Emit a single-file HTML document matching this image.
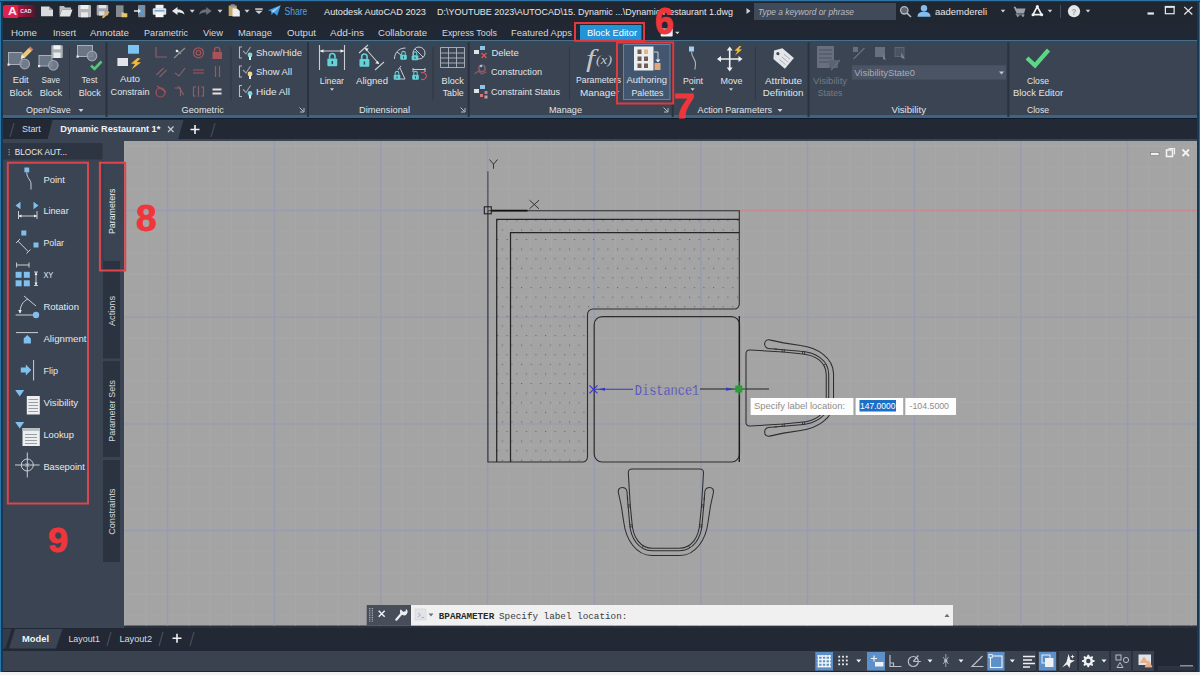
<!DOCTYPE html>
<html><head><meta charset="utf-8">
<style>
*{box-sizing:border-box;margin:0;padding:0}
html,body{width:1200px;height:675px;overflow:hidden;background:#222834;font-family:"Liberation Sans",sans-serif;}
#app{position:relative;width:1200px;height:675px;overflow:hidden;background:#222834;}
.abs{position:absolute}
.t{position:absolute;white-space:nowrap;color:#e4e7ea;font-size:11px;line-height:12px}
.c{text-align:center;transform:translateX(-50%)}
/* title */
#title{left:0;top:0;width:1200px;height:23px;background:#212731}
#menubar{left:0;top:23px;width:1200px;height:19px;background:linear-gradient(180deg,#222833 0,#222833 65%,#1a2a3a 85%,#0f2233 100%)}
#ribbon{left:3px;top:40px;width:1194px;height:79px;background:linear-gradient(180deg,#4f6d85 0,#4f6d85 1px,#33485a 1.5px,#3b4452 8px,#3b4452 75px,#3f6383 75.5px,#3f6383 77.5px,#0e1b2b 78px)}
.ptitle{left:0;top:104px;height:14px}
.sep{position:absolute;top:42px;width:1px;height:74px;background:#2c3340}
#ftabs{left:0;top:119px;width:1200px;height:20px;background:#222834}
#work{left:0;top:139px;width:1200px;height:489px;background:#3b4452}
#canvas{left:124px;top:141px;width:1073px;height:487px;background:#2a303c;overflow:hidden}
#ltabs{left:0;top:628px;width:1200px;height:23px;background:#222834}
#status{left:0;top:651px;width:1200px;height:21px;background:linear-gradient(180deg,#3a4250 0,#3a4250 19.5px,#1f2530 20px)}
#botline{left:0;top:672px;width:1200px;height:3px;background:#f2f2f2}
.m{top:26px;font-size:11px;line-height:13px;color:#d3d7dc}
</style></head><body>
<div id="app">
<div id="title" class="abs"></div>
<div id="menubar" class="abs"></div>
<div id="ribbon" class="abs"></div>
<div id="ftabs" class="abs"></div>
<div id="work" class="abs"></div>
<div id="canvas" class="abs"></div>
<div id="ltabs" class="abs"></div>
<div id="status" class="abs"></div>
<div id="botline" class="abs"></div>
<div class="abs" style="left:3px;top:5px;width:15px;height:12.500px;background:#e0204d;border-radius:2px 0 0 2px"></div>
<div class="abs" style="left:18px;top:5px;width:19px;height:12px;background:linear-gradient(90deg,#b0143c,#6a1532 70%,#2a2030)"></div>
<svg class="abs" style="left:0;top:0" width="1200" height="675" viewBox="0 0 1200 675" font-family="Liberation Sans, sans-serif">
<text x="8" y="15" textLength="9" lengthAdjust="spacingAndGlyphs" font-size="10.5" fill="#fbe6ec" font-weight="bold">A</text>
<text x="20.3" y="13.2" textLength="11.0" lengthAdjust="spacingAndGlyphs" font-size="5.8" fill="#fbe6ec" font-weight="bold">CAD</text>

 <path d="M41 6.500h8l4 3.500v6.300H41z" fill="#d9dbde"/><path d="M49 6.500v3.500h4z" fill="#9aa0a8"/>
 <path d="M59.500 6h4.500l1 1.500h6v2H62l-2.500 6.500z" fill="#b9bcc1"/><path d="M62 9.500h10.500l-2.500 7H59.500z" fill="#e2e4e6"/>
 <rect x="78" y="5" width="13" height="12.300" rx="1" fill="#b3b6bb"/><rect x="80.500" y="5" width="8" height="4" fill="#eeeeee"/><rect x="81" y="12.300" width="7" height="5" fill="#e8e8e8"/>
 <rect x="96.700" y="5" width="11.500" height="10.500" rx="1" fill="#a3a7ad"/><rect x="98.700" y="5" width="7.500" height="3.300" fill="#e4e4e4"/><rect x="99" y="11.300" width="5.500" height="4.200" fill="#dcdcdc"/><path d="M102.500 16.500l5.500-5.500 1.400 1.400-5.500 5.500-1.800.4z" fill="#e2b25a"/>
 <rect x="116" y="5.300" width="7.500" height="11.700" fill="#858a92"/><path d="M121.500 12.500h2.300l.8.800h2.700v4h-5.800z" fill="#e7c66a"/>
 <rect x="138" y="5" width="7.300" height="12.200" rx="1" fill="#858a92"/><rect x="139.300" y="6.800" width="4.700" height="8" fill="#5f96c4"/><path d="M134 10.300h4v-1.800l3 2.500-3 2.500v-1.800h-4z" fill="#e6e8ea"/>
 <rect x="155.500" y="4.800" width="8" height="4" fill="#f0f0f0"/><rect x="152.800" y="8.300" width="13.400" height="6.500" rx="1" fill="#dfe2e5"/><rect x="155.500" y="12.500" width="8" height="4.700" fill="#f7f7f7"/><rect x="154.500" y="10" width="10" height="1.500" fill="#7aa7cf"/>
 <path d="M172 11l5.500-4v2.500c4 0 6.500 1.500 7 5.200-2-1.800-4-2.200-7-2.200v2.500z" fill="#e6e8ea"/>
 <path d="M211.700 11l-5.500-4v2.500c-4 0-6.500 1.500-7 5.200 2-1.800 4-2.200 7-2.200v2.500z" fill="#6a717b"/>
 <rect x="228.700" y="5.500" width="8" height="10.500" fill="#c8a56a"/><rect x="230.700" y="4.300" width="4" height="2.700" fill="#8d9299"/><path d="M232.500 8.500h4.500l2.800 2.500V16.500H232.500z" fill="#eceeef"/>
 <rect x="255.200" y="8.300" width="7.500" height="1.500" fill="#d0d3d7"/><path d="M255.200 10.800h7.500l-3.750 3.200z" fill="#d0d3d7"/>
 <path d="M268 10.300l12.700-5.100-3.500 10.500-3.700-3.200-2 2.800-.3-4z" fill="#3f9be0"/><path d="M271.200 11.300l9.500-6.100-7.200 7.300z" fill="#a9d4f5"/>
<path d="M189.7 9.7h5l-2.5 3z" fill="#d0d3d7"/>
<path d="M217.5 9.7h5l-2.5 3z" fill="#d0d3d7"/>
<path d="M244.5 9.7h5l-2.5 3z" fill="#d0d3d7"/>
<text x="284.5" y="15" textLength="22.8" lengthAdjust="spacingAndGlyphs" font-size="10" fill="#56a2d9">Share</text>
<text x="324" y="15" textLength="102" lengthAdjust="spacingAndGlyphs" font-size="9.5" fill="#e6e8ea">Autodesk AutoCAD 2023</text>
<text x="437" y="15" textLength="296" lengthAdjust="spacingAndGlyphs" font-size="9.5" fill="#e6e8ea">D:\YOUTUBE 2023\AUTOCAD\15. Dynamic ...\Dynamic Restaurant 1.dwg</text>
<path d="M746.500 8l4 3-4 3z" fill="#d0d3d7"/>
<rect x="754" y="3" width="142" height="17" fill="#414a59"/>
<text x="758" y="15" textLength="96" lengthAdjust="spacingAndGlyphs" font-size="9" fill="#b8bdc4" font-style="italic">Type a keyword or phrase</text>

 <circle cx="904.300" cy="10.300" r="3.700" fill="#5d6672" stroke="#b4b9c0" stroke-width="1.300"/><path d="M907 13.200l4 3.800" stroke="#b4b9c0" stroke-width="1.700"/>
 <circle cx="924" cy="8.300" r="3.200" fill="#84bdec"/><path d="M917.500 16.800c0-3.800 3-5 6.500-5s6.500 1.200 6.500 5z" fill="#84bdec"/>
 <path d="M1013.500 6.800h2.200l.6 1.700h9.200l-1.500 5h-7.200z" fill="#9ba1a9"/><path d="M1016.500 13.500l-.5 1.300h8.500" stroke="#9ba1a9" stroke-width=".9" fill="none"/><circle cx="1017.800" cy="15.800" r="1.100" fill="#9ba1a9"/><circle cx="1023" cy="15.800" r="1.100" fill="#9ba1a9"/>
 <path d="M1037.300 6.700l-4.300 8h8.600z" fill="none" stroke="#eef0f2" stroke-width="1.700" stroke-linejoin="round"/><circle cx="1037.300" cy="6.500" r="1.500" fill="#eef0f2"/><circle cx="1033" cy="14.800" r="1.500" fill="#eef0f2"/><circle cx="1041.700" cy="14.800" r="1.500" fill="#eef0f2"/>
 <rect x="1060" y="5" width="1" height="13" fill="#454e5c"/>
 <circle cx="1074" cy="11.200" r="6.100" fill="#e4e6e8"/>
 <rect x="1147.500" y="12.400" width="6.400" height="2.200" fill="#e6e8ea"/>
 <rect x="1165.400" y="6.900" width="8.700" height="6.800" fill="none" stroke="#e6e8ea" stroke-width="1.200"/><rect x="1164.800" y="5.900" width="9.900" height="1.800" fill="#e6e8ea"/>
 <path d="M1184.300 6.900l8 7.600m0-7.600l-8 7.600" stroke="#e6e8ea" stroke-width="1.300"/>
<path d="M1000.75 9.85h4.5l-2.25 2.7z" fill="#d0d3d7"/>
<path d="M1047.75 9.85h4.5l-2.25 2.7z" fill="#d0d3d7"/>
<path d="M1085.75 9.85h4.5l-2.25 2.7z" fill="#d0d3d7"/>
<text x="1071.6" y="14.6" textLength="4.8" lengthAdjust="spacingAndGlyphs" font-size="9.5" fill="#9fa4ab" font-weight="bold">?</text>
<text x="935" y="15" textLength="52" lengthAdjust="spacingAndGlyphs" font-size="9.5" fill="#e6e8ea">aademdereli</text>
</svg>

<svg class="abs" style="left:0;top:0" width="1200" height="675" viewBox="0 0 1200 675" font-family="Liberation Sans, sans-serif">
<text x="11" y="36" textLength="26" lengthAdjust="spacingAndGlyphs" font-size="9.5" fill="#d3d7dc">Home</text>
<text x="53" y="36" textLength="23" lengthAdjust="spacingAndGlyphs" font-size="9.5" fill="#d3d7dc">Insert</text>
<text x="90" y="36" textLength="39" lengthAdjust="spacingAndGlyphs" font-size="9.5" fill="#d3d7dc">Annotate</text>
<text x="144" y="36" textLength="44" lengthAdjust="spacingAndGlyphs" font-size="9.5" fill="#d3d7dc">Parametric</text>
<text x="203" y="36" textLength="20" lengthAdjust="spacingAndGlyphs" font-size="9.5" fill="#d3d7dc">View</text>
<text x="238" y="36" textLength="34" lengthAdjust="spacingAndGlyphs" font-size="9.5" fill="#d3d7dc">Manage</text>
<text x="287" y="36" textLength="29" lengthAdjust="spacingAndGlyphs" font-size="9.5" fill="#d3d7dc">Output</text>
<text x="330" y="36" textLength="34" lengthAdjust="spacingAndGlyphs" font-size="9.5" fill="#d3d7dc">Add-ins</text>
<text x="378" y="36" textLength="49" lengthAdjust="spacingAndGlyphs" font-size="9.5" fill="#d3d7dc">Collaborate</text>
<text x="442" y="36" textLength="55" lengthAdjust="spacingAndGlyphs" font-size="9.5" fill="#d3d7dc">Express Tools</text>
<text x="511" y="36" textLength="61" lengthAdjust="spacingAndGlyphs" font-size="9.5" fill="#d3d7dc">Featured Apps</text>
<rect x="580" y="25" width="61.500" height="15.500" fill="#2494d8"/>
<text x="587" y="36" textLength="50" lengthAdjust="spacingAndGlyphs" font-size="9.5" fill="#ffffff">Block Editor</text>
<rect x="660.700" y="28.500" width="12" height="8" rx="1" fill="#eef0f2"/>
<path d="M675.05 31.65h4.5l-2.25 2.7z" fill="#d0d3d7"/>
</svg>

<svg class="abs" style="left:0;top:0" width="1200" height="675" viewBox="0 0 1200 675" font-family="Liberation Sans, sans-serif">
<rect x="105.5" y="42" width="2" height="75" fill="#2b323f"/>
<rect x="307" y="42" width="2" height="75" fill="#2b323f"/>
<rect x="467.7" y="42" width="2" height="75" fill="#2b323f"/>
<rect x="671.7" y="42" width="2" height="75" fill="#2b323f"/>
<rect x="807.5" y="42" width="2" height="75" fill="#2b323f"/>
<rect x="1007.3" y="42" width="2" height="75" fill="#2b323f"/>
<rect x="69.0" y="47" width="1" height="53" fill="#303745"/>
<rect x="230.5" y="47" width="1" height="53" fill="#303745"/>
<rect x="432.5" y="47" width="1" height="53" fill="#303745"/>
<rect x="569.0" y="47" width="1" height="53" fill="#303745"/>
<rect x="754.9" y="47" width="1" height="53" fill="#303745"/>
<rect x="623.5" y="44.500" width="46.5" height="55" fill="#42566f" stroke="#6484a6" stroke-width="1"/>
<rect x="8.500" y="52.5" width="13.5" height="12" fill="#6a7585" stroke="#a9b0ba" stroke-width="1"/><rect x="7.5" y="63.500" width="2.200" height="2.200" fill="#e8eaec"/>
<circle cx="24.700" cy="64" r="4.800" fill="#7a8494" fill-opacity=".85" stroke="#9ba3ae" stroke-width="1.2"/>
<path d="M20.800 58.800l1.200-4 7-7 3 3-7 7z" fill="#ecc979"/><path d="M29 47.800l1.300-1.300 3 3-1.300 1.300z" fill="#d9757a"/><path d="M20.800 58.800l1.200-4 2.800 2.800z" fill="#f3efe6"/>
<rect x="39" y="55.500" width="13" height="10.5" fill="#6a7585" stroke="#a9b0ba" stroke-width="1"/><rect x="38" y="65" width="2.200" height="2.200" fill="#e8eaec"/>
<circle cx="53.300" cy="65.300" r="4.800" fill="#7a8494" fill-opacity=".85" stroke="#9ba3ae" stroke-width="1.2"/>
<rect x="51.300" y="45.300" width="11.5" height="12.700" rx="1" fill="#a9aeb5"/><rect x="53.5" y="45.300" width="7" height="4" fill="#f1f2f3"/><rect x="53.5" y="52.500" width="7" height="5.5" fill="#e9eaec"/>
<rect x="77.5" y="45.500" width="15" height="11" fill="#6a7585" stroke="#a9b0ba" stroke-width="1"/><rect x="76.500" y="55.5" width="2.200" height="2.200" fill="#e8eaec"/>
<circle cx="92" cy="56" r="4.800" fill="#7a8494" fill-opacity=".85" stroke="#9ba3ae" stroke-width="1.2"/>
<path d="M91 65.500l3.500 3.500 7-7.500" fill="none" stroke="#52c878" stroke-width="2.600"/>
<text x="12.7" y="83.3" textLength="16.0" lengthAdjust="spacingAndGlyphs" font-size="9.5" fill="#e1e4e8">Edit</text>
<text x="9.6" y="95.5" textLength="22.4" lengthAdjust="spacingAndGlyphs" font-size="9.5" fill="#e1e4e8">Block</text>
<text x="41.6" y="83.3" textLength="18.4" lengthAdjust="spacingAndGlyphs" font-size="9.5" fill="#e1e4e8">Save</text>
<text x="39.7" y="95.5" textLength="22.3" lengthAdjust="spacingAndGlyphs" font-size="9.5" fill="#e1e4e8">Block</text>
<text x="81.6" y="83.3" textLength="15.7" lengthAdjust="spacingAndGlyphs" font-size="9.5" fill="#e1e4e8">Test</text>
<text x="78.7" y="95.5" textLength="22.0" lengthAdjust="spacingAndGlyphs" font-size="9.5" fill="#e1e4e8">Block</text>
<text x="26" y="113.3" textLength="44.7" lengthAdjust="spacingAndGlyphs" font-size="9.5" fill="#e1e4e8">Open/Save</text>
<path d="M78.5 109.0h5l-2.5 3z" fill="#d0d3d7"/>
<rect x="128" y="45" width="11" height="8.700" fill="#7cc4f2"/><rect x="117.400" y="58" width="10.600" height="8" fill="#e2e4e8"/>
<path d="M137.500 58l-6.500 5.500 4 .5-3.500 5.500 9.500-7-4.200-.5 3.700-3.500z" fill="#f1b93c"/>
<text x="120" y="82.2" textLength="20" lengthAdjust="spacingAndGlyphs" font-size="9.5" fill="#e1e4e8">Auto</text>
<text x="110.6" y="95" textLength="38.9" lengthAdjust="spacingAndGlyphs" font-size="9.5" fill="#e1e4e8">Constrain</text>
<path d="M156 47v10h11" fill="none" stroke="#86606a" stroke-width="1.2"/>
<path d="M174 58l11-10M176 50l5 4" fill="none" stroke="#8c8f98" stroke-width="1.2"/><circle cx="177" cy="51" r="1.3" fill="#e8e8ea"/>
<circle cx="198.500" cy="52.800" r="5" fill="none" stroke="#a9525a" stroke-width="1.2"/><circle cx="198.5" cy="52.800" r="2.300" fill="none" stroke="#a9525a" stroke-width="1.2"/>
<rect x="212.500" y="52" width="9.500" height="7" fill="#a9525a"/><path d="M214.500 52v-2a2.700 2.700 0 0 1 5.400 0v2" fill="none" stroke="#a9525a" stroke-width="1.300"/>
<path d="M156.500 75l7-7M159.500 77l7-7" stroke="#86606a" stroke-width="1.2"/>
<path d="M175 73l4 3 6-8" fill="none" stroke="#86606a" stroke-width="1.2"/>
<path d="M193 70h11M193 73h11" stroke="#a9525a" stroke-width="1.2"/>
<path d="M215.500 66v11M219.500 66v11" stroke="#a9525a" stroke-width="1.2"/>
<circle cx="160.500" cy="92.500" r="4.500" fill="none" stroke="#a9525a" stroke-width="1.2"/><path d="M157 86l9 6" stroke="#a9525a" stroke-width="1.2"/>
<path d="M174.500 88h6v8M178 86l6 9" fill="none" stroke="#86606a" stroke-width="1.2"/>
<path d="M196 87h-2.500v9h2.500M201 87h2.500v9h-2.500M198.500 86v11" fill="none" stroke="#86606a" stroke-width="1.2"/>
<path d="M212.500 89.500h9M212.500 93.500h9" stroke="#e9dfe2" stroke-width="1.800"/>
<path d="M242 47h-2.500v11h2.500" fill="none" stroke="#b5bbc4" stroke-width="1.100"/><path d="M243 51l3 3 4.500-7" fill="none" stroke="#9aa1ab" stroke-width="1.100"/>
<circle cx="250" cy="55" r="2.400" fill="#7fd6dc"/><rect x="249" y="56.5" width="2" height="3.500" fill="#e9ecef"/>
<path d="M242 66h-2.500v11h2.500" fill="none" stroke="#b5bbc4" stroke-width="1.100"/><path d="M243 70l3 3 4.500-7" fill="none" stroke="#9aa1ab" stroke-width="1.100"/>
<circle cx="250" cy="74" r="2.400" fill="#f4d58a"/><rect x="249" y="75.5" width="2" height="3.500" fill="#e9ecef"/>
<path d="M242 85.5h-2.500v11h2.500" fill="none" stroke="#b5bbc4" stroke-width="1.100"/><path d="M243 89.5l3 3 4.500-7" fill="none" stroke="#9aa1ab" stroke-width="1.100"/>
<circle cx="250" cy="93.5" r="2.400" fill="#7fd6dc"/><rect x="249" y="95.0" width="2" height="3.500" fill="#e9ecef"/>
<text x="256" y="56.2" textLength="46" lengthAdjust="spacingAndGlyphs" font-size="9.5" fill="#e1e4e8">Show/Hide</text>
<text x="256" y="75.2" textLength="36" lengthAdjust="spacingAndGlyphs" font-size="9.5" fill="#e1e4e8">Show All</text>
<text x="256" y="94.8" textLength="34" lengthAdjust="spacingAndGlyphs" font-size="9.5" fill="#e1e4e8">Hide All</text>
<text x="181.6" y="113.3" textLength="42.2" lengthAdjust="spacingAndGlyphs" font-size="9.5" fill="#e1e4e8">Geometric</text>
<path d="M300 112h4v-4M299.5 107.5l4 4" fill="none" stroke="#b4bac3" stroke-width="1"/>
<path d="M319.500 45v25M344.500 45v25M320 51h24" stroke="#c9ced5" stroke-width="1.100" fill="none"/><path d="M320 51l3.500-1.800v3.600zM344 51l-3.500-1.800v3.600z" fill="#e9ecef"/>
<rect x="327.35" y="58.474999999999994" width="9.9" height="7.65" rx="1" fill="#62d3d6"/><path d="M329.6 58.474999999999994v-2.25a2.7 2.7 0 0 1 5.4 0v2.25" fill="none" stroke="#62d3d6" stroke-width="1.62"/><rect x="331.58" y="60.95" width="1.4400000000000002" height="3.15" fill="#3b4453"/>
<text x="319.8" y="83.6" textLength="24.2" lengthAdjust="spacingAndGlyphs" font-size="9.5" fill="#e1e4e8">Linear</text>
<path d="M330.0 88.25h4l-2.0 2.5z" fill="#d0d3d7"/>
<path d="M359 53l9-8M375 70l9-8M365 48l14 16" stroke="#c9ced5" stroke-width="1.100" fill="none"/><path d="M365 48l3.800.8-2.700 2.500zM379 64l-3.800-.8 2.700-2.500z" fill="#e9ecef"/>
<rect x="359.45" y="58.974999999999994" width="9.9" height="7.65" rx="1" fill="#62d3d6"/><path d="M361.7 58.974999999999994v-2.25a2.7 2.7 0 0 1 5.4 0v2.25" fill="none" stroke="#62d3d6" stroke-width="1.62"/><rect x="363.67999999999995" y="61.45" width="1.4400000000000002" height="3.15" fill="#3b4453"/>
<text x="356" y="83.6" textLength="32" lengthAdjust="spacingAndGlyphs" font-size="9.5" fill="#e1e4e8">Aligned</text>
<path d="M394.500 59c0-6 4-11 11-11M397 52l4 3" stroke="#c9ced5" stroke-width="1" fill="none"/><rect x="400.2" y="54.650000000000006" width="6.6" height="5.1" rx="1" fill="#62d3d6"/><path d="M401.7 54.650000000000006v-1.5a1.7999999999999998 1.7999999999999998 0 0 1 3.5999999999999996 0v1.5" fill="none" stroke="#62d3d6" stroke-width="1.08"/><rect x="403.02" y="56.3" width="0.96" height="2.1" fill="#3b4453"/>
<circle cx="419" cy="53" r="6" fill="none" stroke="#c9ced5" stroke-width="1"/><path d="M415 49l8 8" stroke="#c9ced5" stroke-width="1"/><rect x="411.7" y="55.150000000000006" width="6.6" height="5.1" rx="1" fill="#62d3d6"/><path d="M413.2 55.150000000000006v-1.5a1.7999999999999998 1.7999999999999998 0 0 1 3.5999999999999996 0v1.5" fill="none" stroke="#62d3d6" stroke-width="1.08"/><rect x="414.52" y="56.8" width="0.96" height="2.1" fill="#3b4453"/>
<path d="M400 68l5 11h-9M401 66l-3 4" stroke="#c9ced5" stroke-width="1" fill="none"/><rect x="393.7" y="74.65" width="6.6" height="5.1" rx="1" fill="#62d3d6"/><path d="M395.2 74.65v-1.5a1.7999999999999998 1.7999999999999998 0 0 1 3.5999999999999996 0v1.5" fill="none" stroke="#62d3d6" stroke-width="1.08"/><rect x="396.52" y="76.3" width="0.96" height="2.1" fill="#3b4453"/>
<path d="M413 68v4M425 68v4M413 69.500h12" stroke="#c9ced5" stroke-width="1" fill="none"/><path d="M421 73a3.500 3.500 0 1 1 0 6" stroke="#c9575e" stroke-width="1.100" fill="none"/><rect x="412.2" y="74.65" width="6.6" height="5.1" rx="1" fill="#62d3d6"/><path d="M413.7 74.65v-1.5a1.7999999999999998 1.7999999999999998 0 0 1 3.5999999999999996 0v1.5" fill="none" stroke="#62d3d6" stroke-width="1.08"/><rect x="415.02" y="76.3" width="0.96" height="2.1" fill="#3b4453"/>
<path d="M440.500 47.500h24v20h-24zM440.500 53h24M440.500 58h24M440.500 63h24M448.500 47.500v20M456.500 47.500v20" fill="none" stroke="#b0b6bf" stroke-width=".9"/>
<text x="441.6" y="83.6" textLength="22.2" lengthAdjust="spacingAndGlyphs" font-size="9.5" fill="#e1e4e8">Block</text>
<text x="442.7" y="95.6" textLength="21.1" lengthAdjust="spacingAndGlyphs" font-size="9.5" fill="#e1e4e8">Table</text>
<text x="359" y="113.3" textLength="51" lengthAdjust="spacingAndGlyphs" font-size="9.5" fill="#e1e4e8">Dimensional</text>
<path d="M461 112h4v-4M460.5 107.5l4 4" fill="none" stroke="#b4bac3" stroke-width="1"/>
<rect x="474" y="50" width="5" height="4" fill="#dfe2e6"/><rect x="480" y="46" width="5" height="4" fill="#8cc4ea"/><path d="M481.500 53l5 5m0-5l-5 5" stroke="#d9575e" stroke-width="1.400"/>
<circle cx="482" cy="68.500" r="3.200" fill="none" stroke="#8d5a64" stroke-width="1.500"/><circle cx="481" cy="66" r="1.300" fill="#8cc4ea"/><path d="M474.500 74l4-3 3 3 5-2" stroke="#8d5a64" stroke-width="1.200" fill="none"/>
<rect x="474" y="89" width="5" height="4" fill="#dfe2e6"/><rect x="480" y="85" width="5" height="4" fill="#8cc4ea"/><rect x="480" y="94" width="3" height="3" fill="#d9757c"/><rect x="484.500" y="91" width="3" height="3" fill="#d9757c"/><rect x="484.500" y="95.500" width="3" height="3" fill="#c9a0a6"/>
<text x="491.5" y="56.2" textLength="27.2" lengthAdjust="spacingAndGlyphs" font-size="9.5" fill="#e1e4e8">Delete</text>
<text x="491" y="75.2" textLength="51" lengthAdjust="spacingAndGlyphs" font-size="9.5" fill="#e1e4e8">Construction</text>
<text x="491" y="94.8" textLength="69" lengthAdjust="spacingAndGlyphs" font-size="9.5" fill="#e1e4e8">Constraint Status</text>
<text x="586" y="67" font-size="25" font-style="italic" font-family="Liberation Serif, serif" fill="#d4d8dd" fill-opacity=".9" textLength="9" lengthAdjust="spacingAndGlyphs">f</text>
<text x="596" y="63.500" font-size="13" font-style="italic" font-family="Liberation Serif, serif" fill="#d4d8dd" fill-opacity=".9" textLength="16" lengthAdjust="spacingAndGlyphs">(x)</text>
<text x="576" y="83.3" textLength="45" lengthAdjust="spacingAndGlyphs" font-size="9.5" fill="#e1e4e8">Parameters</text>
<text x="580" y="95.6" textLength="39" lengthAdjust="spacingAndGlyphs" font-size="9.5" fill="#e1e4e8">Manager</text>
<rect x="634" y="46.500" width="19.500" height="24" fill="#eceef0"/>
<rect x="637.5" y="49.5" width="4" height="4.500" fill="#6d5f58"/>
<rect x="644.0" y="49.5" width="4" height="4.500" fill="#e8b58a"/>
<rect x="637.5" y="56.5" width="4" height="4.500" fill="#6d5f58"/>
<rect x="644.0" y="56.5" width="4" height="4.500" fill="#6d5f58"/>
<rect x="637.5" y="63.5" width="4" height="4.500" fill="#6d5f58"/>
<rect x="644.0" y="63.5" width="4" height="4.500" fill="#6d5f58"/>
<path d="M654 52h4v9" fill="none" stroke="#c9ced5" stroke-width="1"/><path d="M655.500 59.500h5l-2.500 3z" fill="#e9ecef"/><rect x="654.500" y="63" width="6" height="7" fill="#e3a77c"/>
<text x="626.5" y="83.3" textLength="40.5" lengthAdjust="spacingAndGlyphs" font-size="9.5" fill="#e1e4e8">Authoring</text>
<text x="631.4" y="95.6" textLength="32.1" lengthAdjust="spacingAndGlyphs" font-size="9.5" fill="#e1e4e8">Palettes</text>
<text x="549" y="113.3" textLength="33" lengthAdjust="spacingAndGlyphs" font-size="9.5" fill="#e1e4e8">Manage</text>
<path d="M664 112h4v-4M663.5 107.5l4 4" fill="none" stroke="#b4bac3" stroke-width="1"/>
<rect x="689" y="46.500" width="5" height="5" fill="#9fd0f2"/><path d="M691.500 51.500c0 6 4 7 4 12c0 3-.5 4-.5 6" fill="none" stroke="#aeb4bd" stroke-width="1.100"/>
<text x="683" y="83.6" textLength="20" lengthAdjust="spacingAndGlyphs" font-size="9.5" fill="#e1e4e8">Point</text>
<path d="M690.6 88.25h4l-2.0 2.5z" fill="#d0d3d7"/>
<path d="M729.700 49v20M719.500 59h20.500" stroke="#eef0f2" stroke-width="1.600"/><path d="M729.700 46.500l-3 4h6zM729.700 71.500l-3-4h6zM717 59l4-3v6zM742.500 59l-4-3v6z" fill="#eef0f2"/>
<path d="M739.500 46l-5 4.500 3 .5-2.500 4.500 7-6-3.200-.3 2.700-3.200z" fill="#f1b93c"/>
<text x="720.5" y="83.6" textLength="22.0" lengthAdjust="spacingAndGlyphs" font-size="9.5" fill="#e1e4e8">Move</text>
<path d="M729.0 88.25h4l-2.0 2.5z" fill="#d0d3d7"/>
<g transform="translate(782.500 57.500) rotate(40)"><path d="M-11 0l5-7h15v14h-15z" fill="#e3e5e8"/><circle cx="-6" cy="0" r="1.600" fill="#3b4453"/><path d="M-1-3.500h8M-1 0h8M-1 3.500h8" stroke="#a9afb8" stroke-width=".9"/></g>
<text x="765" y="83.6" textLength="37" lengthAdjust="spacingAndGlyphs" font-size="9.5" fill="#e1e4e8">Attribute</text>
<text x="762.7" y="95.6" textLength="40.8" lengthAdjust="spacingAndGlyphs" font-size="9.5" fill="#e1e4e8">Definition</text>
<text x="697.6" y="113.3" textLength="74.4" lengthAdjust="spacingAndGlyphs" font-size="9.5" fill="#e1e4e8">Action Parameters</text>
<path d="M777.5 109.0h5l-2.5 3z" fill="#d0d3d7"/>
<rect x="817" y="46" width="17" height="22" fill="#687080"/><path d="M819 50h13M819 54h13M819 58h13M819 62h13" stroke="#4a5362" stroke-width="1"/><rect x="829" y="60" width="9" height="8" fill="#5a6372"/><path d="M831 70l9-10" stroke="#687080" stroke-width="1.200"/>
<text x="813" y="83.6" textLength="34" lengthAdjust="spacingAndGlyphs" font-size="9.5" fill="#737b88">Visibility</text>
<text x="817.7" y="95.6" textLength="24.7" lengthAdjust="spacingAndGlyphs" font-size="9.5" fill="#737b88">States</text>
<path d="M853.500 59l11-11" stroke="#687080" stroke-width="1.200"/><rect x="853" y="47" width="5" height="5" fill="#687080"/>
<rect x="875" y="47" width="10" height="10" fill="#687080"/><path d="M883 54l3 6-3-1z" fill="#7d8594"/>
<rect x="895" y="47.500" width="9" height="9" fill="#4a5362" stroke="#5c6574" stroke-width="1"/><path d="M901 52l4 7-3.500-1z" fill="#7d8594"/>
<rect x="852" y="65.300" width="154" height="14.200" fill="#4a5465"/>
<text x="854.3" y="76.3" textLength="60.7" lengthAdjust="spacingAndGlyphs" font-size="9.5" fill="#a7aeb8">VisibilityState0</text>
<path d="M999.0 71.5h5l-2.5 3z" fill="#c3c8cf"/>
<text x="891.4" y="113.3" textLength="34.6" lengthAdjust="spacingAndGlyphs" font-size="9.5" fill="#e1e4e8">Visibility</text>
<path d="M1027 58l8 7.500 13.500-15.500" fill="none" stroke="#5bd884" stroke-width="4.200"/>
<text x="1027" y="83.6" textLength="22" lengthAdjust="spacingAndGlyphs" font-size="9.5" fill="#e1e4e8">Close</text>
<text x="1013" y="95.6" textLength="50" lengthAdjust="spacingAndGlyphs" font-size="9.5" fill="#e1e4e8">Block Editor</text>
<text x="1027" y="113.3" textLength="22" lengthAdjust="spacingAndGlyphs" font-size="9.5" fill="#e1e4e8">Close</text>
</svg>

<svg class="abs" style="left:0;top:0" width="1200" height="675" viewBox="0 0 1200 675" font-family="Liberation Sans, sans-serif">
<path d="M47.500 139.500l5-19.500h131l-5.500 19.500z" fill="#3b4453"/>
<path d="M10 137l4-14" stroke="#3d4553" stroke-width="1.500"/><path d="M211 137l4-14" stroke="#3d4553" stroke-width="1.500"/>
<text x="22" y="132.3" textLength="18.8" lengthAdjust="spacingAndGlyphs" font-size="9.5" fill="#d8dce0">Start</text>
<text x="60.3" y="132.3" textLength="100.0" lengthAdjust="spacingAndGlyphs" font-size="9.5" fill="#f2f3f5" font-weight="bold">Dynamic Restaurant 1*</text>
<path d="M168 126.500l5.500 5.500m0-5.500l-5.500 5.500" stroke="#c3c8cf" stroke-width="1.200"/>
<path d="M190.500 129.500h9M195 125v9" stroke="#f0f1f3" stroke-width="1.600"/>
</svg>

<svg class="abs" style="left:0;top:0" width="1200" height="675" viewBox="0 0 1200 675" font-family="Liberation Sans, sans-serif">
<rect x="3" y="143" width="99.500" height="16.500" fill="#2e3542"/>
<rect x="8.500" y="149" width="1.200" height="1.200" fill="#9aa1ab"/>
<rect x="8.500" y="151.5" width="1.200" height="1.200" fill="#9aa1ab"/>
<rect x="8.500" y="154" width="1.200" height="1.200" fill="#9aa1ab"/>
<text x="14.7" y="154.8" textLength="52.3" lengthAdjust="spacingAndGlyphs" font-size="9" fill="#e8eaed">BLOCK AUT...</text>
<rect x="103" y="261" width="17" height="97.500" fill="#2c3340"/>
<rect x="103" y="361" width="17" height="96" fill="#2c3340"/>
<rect x="103" y="460" width="17" height="102" fill="#2c3340"/>
<rect x="102.500" y="160" width=".8" height="101" fill="#333b48"/>
<text transform="translate(114.800 234) rotate(-90)" textLength="45.5" lengthAdjust="spacingAndGlyphs" font-size="9.5" fill="#e8eaed">Parameters</text>
<text transform="translate(114.800 326) rotate(-90)" textLength="30" lengthAdjust="spacingAndGlyphs" font-size="9.5" fill="#d5d9de">Actions</text>
<text transform="translate(114.800 441.7) rotate(-90)" textLength="61.7" lengthAdjust="spacingAndGlyphs" font-size="9.5" fill="#d5d9de">Parameter Sets</text>
<text transform="translate(114.800 534.8) rotate(-90)" textLength="46.2" lengthAdjust="spacingAndGlyphs" font-size="9.5" fill="#d5d9de">Constraints</text>
<text x="43.4" y="182.5" textLength="21.6" lengthAdjust="spacingAndGlyphs" font-size="9.5" fill="#e6e8eb">Point</text>
<text x="43.4" y="214.4" textLength="25.3" lengthAdjust="spacingAndGlyphs" font-size="9.5" fill="#e6e8eb">Linear</text>
<text x="43.4" y="246" textLength="20.6" lengthAdjust="spacingAndGlyphs" font-size="9.5" fill="#e6e8eb">Polar</text>
<text x="43.4" y="277.8" textLength="9.9" lengthAdjust="spacingAndGlyphs" font-size="9.5" fill="#e6e8eb">XY</text>
<text x="43.4" y="309.5" textLength="35.6" lengthAdjust="spacingAndGlyphs" font-size="9.5" fill="#e6e8eb">Rotation</text>
<text x="43.4" y="341.6" textLength="43.1" lengthAdjust="spacingAndGlyphs" font-size="9.5" fill="#e6e8eb">Alignment</text>
<text x="43.4" y="373.5" textLength="14.6" lengthAdjust="spacingAndGlyphs" font-size="9.5" fill="#e6e8eb">Flip</text>
<text x="43.4" y="405.6" textLength="34.8" lengthAdjust="spacingAndGlyphs" font-size="9.5" fill="#e6e8eb">Visibility</text>
<text x="43.4" y="437.5" textLength="30.6" lengthAdjust="spacingAndGlyphs" font-size="9.5" fill="#e6e8eb">Lookup</text>
<text x="43.4" y="469.6" textLength="41.4" lengthAdjust="spacingAndGlyphs" font-size="9.5" fill="#e6e8eb">Basepoint</text>
<rect x="24.400" y="167.500" width="4.800" height="4.800" fill="#7fc0ee"/><path d="M26.800 172.500c0 6 4.200 7 4.200 11.500v5.500" fill="none" stroke="#c9ced5" stroke-width="1"/>
<path d="M15.500 205.500l5-3.800v7.600zM38.500 205.500l-5-3.800v7.600z" fill="#7fc0ee"/><path d="M18.500 211v8M37 211v8M18.500 216h18.500" stroke="#c9ced5" stroke-width="1" fill="none"/><path d="M18.500 216l3-1.500v3zM37 216l-3-1.500v3z" fill="#e9ecef"/>
<rect x="21.300" y="230.500" width="5" height="5" fill="#7fc0ee"/><rect x="33.500" y="242.500" width="5" height="5" fill="#7fc0ee"/><path d="M17.800 241l10.600 10.700M16 243l4-4M26.500 253.500l4-4" stroke="#c9ced5" stroke-width="1" fill="none"/>
<path d="M16.600 262.500v5M29 262.500v5M16.600 265h12.400" stroke="#c9ced5" stroke-width="1" fill="none"/><path d="M34 272h4M34 285.500h4M36 272v13.500" stroke="#c9ced5" stroke-width="1" fill="none"/><path d="M36 272l-1.500 3h3zM36 285.500l-1.500-3h3z" fill="#e9ecef"/>
<rect x="15.6" y="271.8" width="6" height="6" fill="#7fc0ee"/>
<rect x="15.6" y="280.3" width="6" height="6" fill="#7fc0ee"/>
<rect x="23.8" y="271.8" width="6" height="6" fill="#7fc0ee"/>
<rect x="23.8" y="280.3" width="6" height="6" fill="#7fc0ee"/>
<path d="M15.600 315h20M24 296l12 10M20 313c0-7 3-12 8-14" stroke="#c9ced5" stroke-width="1" fill="none"/><path d="M20 313.500l-1.800-3.500h3.600z" fill="#e9ecef"/><circle cx="36" cy="315" r="3.200" fill="#7fc0ee"/>
<path d="M16 332.600h22" stroke="#c9ced5" stroke-width="1"/><path d="M23.700 343.500v-5l3.600-3.500 3.600 3.500v5z" fill="#7fc0ee"/>
<path d="M20.800 367.500h5v-3l5.500 5.500-5.500 5.500v-3h-5z" fill="#7fc0ee"/><path d="M33.600 360v20.500" stroke="#c9ced5" stroke-width="1"/>
<path d="M15.200 390h9l-4.500 6.500z" fill="#7fc0ee"/><rect x="26.800" y="396" width="13" height="18.500" fill="#eceeef"/><path d="M28.500 399.500h9.500M28.500 402.500h9.500M28.500 405.500h9.500M28.500 408.500h9.500M28.500 411.500h9.500" stroke="#8e949c" stroke-width=".9"/>
<path d="M15.200 422h9l-4.500 6.500z" fill="#7fc0ee"/><rect x="22.500" y="428" width="17.300" height="18" fill="#eceeef"/><rect x="22.500" y="428" width="17.300" height="3" fill="#b9bec5"/><path d="M25 434.500h12M25 437.500h12M25 440.500h12M25 443.500h12" stroke="#8e949c" stroke-width=".9"/>
<circle cx="27.300" cy="465" r="6" fill="none" stroke="#c9ced5" stroke-width="1"/><path d="M15 465h24.600M27.300 452.500v25" stroke="#c9ced5" stroke-width="1"/><path d="M25.500 463.200l3.600 3.600m0-3.600l-3.600 3.600" stroke="#c9ced5" stroke-width=".8"/>
</svg>

<svg class="abs" style="left:0;top:0" width="1200" height="675" viewBox="0 0 1200 675" font-family="Liberation Sans, sans-serif">
<defs><clipPath id="cv"><rect x="124" y="141" width="1073" height="484.500"/></clipPath>
<clipPath id="sofa"><path d="M496.700 219.300H739.300V304a5 5 0 0 1-5 5H593a5.500 5.500 0 0 0-5.500 5.500V457a5 5 0 0 1-5 5H496.700z"/></clipPath>
<pattern id="dots" x="497" y="219.800" width="9.600" height="19.200" patternUnits="userSpaceOnUse"><rect x="0" y="0" width="1.100" height="1.100" fill="#666668"/><rect x="4.800" y="9.600" width="1.100" height="1.100" fill="#666668"/></pattern>
</defs>
<g clip-path="url(#cv)">
<rect x="124" y="141" width="1073" height="485" fill="#a4a4a5"/>
<path d="M124.9 141V626M146.3 141V626M188.9 141V626M210.3 141V626M231.6 141V626M252.9 141V626M295.6 141V626M316.9 141V626M338.3 141V626M359.6 141V626M402.3 141V626M423.6 141V626M444.9 141V626M466.3 141V626M508.9 141V626M530.3 141V626M551.6 141V626M572.9 141V626M615.6 141V626M636.9 141V626M658.3 141V626M679.6 141V626M722.3 141V626M743.6 141V626M764.9 141V626M786.3 141V626M828.9 141V626M850.3 141V626M871.6 141V626M892.9 141V626M935.6 141V626M956.9 141V626M978.3 141V626M999.6 141V626M1042.3 141V626M1063.6 141V626M1084.9 141V626M1106.3 141V626M1148.9 141V626M1170.3 141V626M1191.6 141V626M124 146.6H1197M124 167.9H1197M124 189.3H1197M124 231.9H1197M124 253.3H1197M124 274.6H1197M124 295.9H1197M124 338.6H1197M124 359.9H1197M124 381.3H1197M124 402.6H1197M124 445.3H1197M124 466.6H1197M124 487.9H1197M124 509.3H1197M124 551.9H1197M124 573.3H1197M124 594.6H1197M124 615.9H1197" stroke="#a8a8a9" stroke-width="1" fill="none"/>
<path d="M167.6 141V626M274.3 141V626M380.9 141V626M487.6 141V626M594.3 141V626M700.9 141V626M807.6 141V626M914.3 141V626M1020.9 141V626M1127.6 141V626M124 210.6H1197M124 317.3H1197M124 423.9H1197M124 530.6H1197" stroke="#999cb0" stroke-width="1.500" fill="none"/>
<path d="M739.500 210.600H1197" stroke="#c98a8e" stroke-width="1"/>
<rect x="490" y="212" width="252" height="252" fill="url(#dots)" clip-path="url(#sofa)"/>
<path d="M487.900 171.300V210" stroke="#3a3a3a" stroke-width="1" fill="none"/>
<path d="M487.900 210.800H739.300V304a5 5 0 0 1-5 5H593a5.500 5.500 0 0 0-5.500 5.500V457a5 5 0 0 1-5 5H487.900z" stroke="#2e2e2e" stroke-width="1.100" fill="none"/>
<path d="M496.700 462V219.300H739.300" stroke="#262626" stroke-width="1.250" fill="none"/>
<path d="M510.500 462V232.700H739.300" stroke="#262626" stroke-width="1.250" fill="none"/>
<rect x="594.200" y="316.600" width="145.300" height="145.400" rx="8" fill="none" stroke="#2e2e2e" stroke-width="1.200"/>
<path d="M739.300 316V462" stroke="#1a1a1a" stroke-width="1.300"/>
<rect x="484.300" y="206.800" width="7" height="7" fill="none" stroke="#222" stroke-width="1.100"/>
<path d="M491.500 210.600H527.500" stroke="#111" stroke-width="1.700"/>
<path d="M529.500 200.200l9.500 8.600m0-8.600l-9.500 8.600" stroke="#333" stroke-width="1" fill="none"/>
<path d="M489.500 159.500l4 4.700 4-4.700m-4 4.700v4.600" stroke="#333" stroke-width="1" fill="none"/>
<g transform="translate(665.900 469)"><g fill="none" stroke="#2e2e2e" stroke-width="1.050">
<path d="M-33.800 0Q-37.800 0 -37.600 4L-35.600 37L-33.900 54C-33 68 -26 79.300 -13 79.300H13C26 79.300 33 68 33.900 54L35.600 37L37.600 4Q37.800 0 33.800 0Z"/>
<path d="M-38.600 28L-36.300 54C-35.400 69 -27.500 81.700 -13.500 81.700H13.500C27.500 81.700 35.400 69 36.300 54L38.600 28"/>
<path d="M-38.200 31L-38.800 25C-38.600 21 -40 18.400 -43.400 18.400C-47 18.400 -48.200 21 -47.300 24.500L-44.600 37L-42 54C-40 70 -30 86.500 -14 86.500H14C30 86.500 40 70 42 54L44.600 37L47.300 24.500C48.200 21 47 18.400 43.400 18.400C40 18.400 38.600 21 38.800 25L38.200 31"/>
<path d="M-38.500 36l3.300-.3M-38.300 38l3.300-.3M-36.800 56l3.100-.3M-36.600 58l3.100-.3M-24 79l1.600-2.400M24 79l-1.600-2.400M38.500 36l-3.300-.3M38.300 38l-3.300-.3M36.800 56l-3.100-.3M36.600 58l-3.100-.3" stroke-width=".8"/>
</g></g>
<g transform="translate(746 388) rotate(-90) scale(1.012)"><g fill="none" stroke="#2e2e2e" stroke-width="1.050">
<path d="M-33.800 0Q-37.800 0 -37.600 4L-35.600 37L-33.900 54C-33 68 -26 79.300 -13 79.300H13C26 79.300 33 68 33.900 54L35.600 37L37.600 4Q37.800 0 33.800 0Z"/>
<path d="M-38.600 28L-36.300 54C-35.400 69 -27.500 81.700 -13.500 81.700H13.500C27.500 81.700 35.400 69 36.300 54L38.600 28"/>
<path d="M-38.200 31L-38.800 25C-38.600 21 -40 18.400 -43.400 18.400C-47 18.400 -48.200 21 -47.300 24.500L-44.600 37L-42 54C-40 70 -30 86.500 -14 86.500H14C30 86.500 40 70 42 54L44.600 37L47.300 24.500C48.200 21 47 18.400 43.400 18.400C40 18.400 38.600 21 38.800 25L38.200 31"/>
<path d="M-38.500 36l3.300-.3M-38.300 38l3.300-.3M-36.800 56l3.100-.3M-36.600 58l3.100-.3M-24 79l1.600-2.400M24 79l-1.600-2.400M38.500 36l-3.300-.3M38.300 38l-3.300-.3M36.800 56l-3.100-.3M36.600 58l-3.100-.3" stroke-width=".8"/>
</g></g>
<path d="M589.500 385.300l8 8m0-8l-8 8" stroke="#3a36c8" stroke-width="1.100"/>
<path d="M594 389.300H633" stroke="#3a36c8" stroke-width="1.100"/><path d="M598 389.300l7-1.500v3z" fill="#3a36c8"/>
<path d="M700 389H769" stroke="#222" stroke-width="1.200"/><path d="M734 389.200l-8-1.600v3.200z" fill="#3a36c8"/>
<text x="634.800" y="394.600" textLength="64.500" lengthAdjust="spacingAndGlyphs" font-size="14.500" fill="#3a36c8" font-family="Liberation Mono, monospace" stroke="#a4a4a5" stroke-width=".35">Distance1</text>
<rect x="735.300" y="385.500" width="7" height="7" fill="#2f9a3f"/><path d="M739 381.500v14M732 389h14" stroke="#2f9a3f" stroke-width="1"/>
<rect x="750.600" y="398" width="102.800" height="17" fill="#fdfdfd"/>
<text x="754" y="409.3" textLength="91" lengthAdjust="spacingAndGlyphs" font-size="8.5" fill="#8c8c8c">Specify label location:</text>
<rect x="855.600" y="398" width="47.600" height="17" fill="#fdfdfd"/><rect x="859.500" y="400" width="36.500" height="11.500" fill="#1c6fc6"/>
<text x="860" y="409.3" textLength="35.5" lengthAdjust="spacingAndGlyphs" font-size="8.5" fill="#ffffff">147.0000</text>
<rect x="905.300" y="398" width="50.700" height="17" fill="#fdfdfd"/>
<text x="909.6" y="409.3" textLength="39.4" lengthAdjust="spacingAndGlyphs" font-size="8.5" fill="#8c8c8c">-104.5000</text>
<rect x="1150.500" y="152.500" width="8.500" height="3" fill="#f2f2f2" stroke="#777" stroke-width=".6"/>
<rect x="1166.500" y="150" width="6" height="6.500" fill="none" stroke="#f2f2f2" stroke-width="1.600"/><path d="M1168.500 148.500h6v6" fill="none" stroke="#f2f2f2" stroke-width="1.200"/>
<path d="M1182.500 149.500l6.500 6.500m0-6.500l-6.500 6.500" stroke="#f2f2f2" stroke-width="1.800"/>
</g>
</svg>

<svg class="abs" style="left:0;top:0" width="1200" height="675" viewBox="0 0 1200 675" font-family="Liberation Sans, sans-serif">
<rect x="366.700" y="605" width="44.300" height="20.500" fill="#474d59"/>
<rect x="411" y="605" width="542" height="20.500" fill="#f0f0f0"/>
<rect x="369.300" y="608.0" width="1" height="1" fill="#c8ccd2"/><rect x="371.800" y="608.0" width="1" height="1" fill="#c8ccd2"/>
<rect x="369.300" y="609.8" width="1" height="1" fill="#c8ccd2"/><rect x="371.800" y="609.8" width="1" height="1" fill="#c8ccd2"/>
<rect x="369.300" y="611.6" width="1" height="1" fill="#c8ccd2"/><rect x="371.800" y="611.6" width="1" height="1" fill="#c8ccd2"/>
<rect x="369.300" y="613.4" width="1" height="1" fill="#c8ccd2"/><rect x="371.800" y="613.4" width="1" height="1" fill="#c8ccd2"/>
<rect x="369.300" y="615.2" width="1" height="1" fill="#c8ccd2"/><rect x="371.800" y="615.2" width="1" height="1" fill="#c8ccd2"/>
<rect x="369.300" y="617.0" width="1" height="1" fill="#c8ccd2"/><rect x="371.800" y="617.0" width="1" height="1" fill="#c8ccd2"/>
<rect x="369.300" y="618.8" width="1" height="1" fill="#c8ccd2"/><rect x="371.800" y="618.8" width="1" height="1" fill="#c8ccd2"/>
<rect x="369.300" y="620.6" width="1" height="1" fill="#c8ccd2"/><rect x="371.800" y="620.6" width="1" height="1" fill="#c8ccd2"/>
<path d="M378.700 610.700l6 6m0-6l-6 6" stroke="#eef0f2" stroke-width="1.500"/>
<path d="M396.300 619.700l5.700-6.700" stroke="#eef0f2" stroke-width="2.200" stroke-linecap="round"/><path d="M400.800 609.300l2.200 2.400 2.600-.4.400-2.200a3.400 3.400 0 0 1-4 5.600a3.400 3.400 0 0 1-1.200-5.400z" fill="#eef0f2"/>
<rect x="415" y="609" width="11" height="11" fill="#e1e3e6" stroke="#cfd2d6" stroke-width=".6"/><path d="M418 613l2.500 2-2.500 2M421.500 617.500h2.500" stroke="#9aa8c8" stroke-width=".9" fill="none"/><path d="M428.5 613.5h5l-2.5 3z" fill="#6a6f78"/>
<text x="438.8" y="618.5" textLength="55.4" lengthAdjust="spacingAndGlyphs" font-size="9.3" fill="#2a2a2a" font-weight="bold" font-family="Liberation Mono, monospace">BPARAMETER</text>
<text x="499" y="618.5" textLength="128.3" lengthAdjust="spacingAndGlyphs" font-size="9.3" fill="#3a3a3a" font-family="Liberation Mono, monospace">Specify label location:</text>
<path d="M944.500 617h5l-2.500-3.200z" fill="#6a6f78"/>
<path d="M9 648.500l6-19.500h47.500l-6.500 19.500z" fill="#3b4453"/>
<path d="M2 648.500v-19.500h9.500l-6 19.500z" fill="#343c49"/>
<path d="M107 646l4-14" stroke="#434b59" stroke-width="1.300"/>
<path d="M159 646l4-14" stroke="#434b59" stroke-width="1.300"/>
<path d="M190 646l4-14" stroke="#434b59" stroke-width="1.300"/>
<text x="22" y="641.7" textLength="27" lengthAdjust="spacingAndGlyphs" font-size="9.5" fill="#f2f3f5" font-weight="bold">Model</text>
<text x="68.4" y="641.7" textLength="31.6" lengthAdjust="spacingAndGlyphs" font-size="9.5" fill="#d8dce0">Layout1</text>
<text x="119.4" y="641.7" textLength="32.6" lengthAdjust="spacingAndGlyphs" font-size="9.5" fill="#d8dce0">Layout2</text>
<path d="M172.500 638.300h9M177 633.800v9" stroke="#f0f1f3" stroke-width="1.600"/>
</svg>

<svg class="abs" style="left:0;top:0" width="1200" height="675" viewBox="0 0 1200 675" font-family="Liberation Sans, sans-serif">
<rect x="1154" y="651" width="43" height="21" fill="#222834"/><rect x="1158" y="666" width="37" height="4.500" fill="#2d3441"/><rect x="1180" y="665" width="13" height="1.500" fill="#8a909a"/>
<rect x="815.3" y="652" width="17.7" height="18.500" fill="#5d90c8"/>
<rect x="867" y="652" width="18" height="18.500" fill="#5d90c8"/>
<rect x="987.3" y="652" width="17.2" height="18.500" fill="#5d90c8"/>
<rect x="1039" y="652" width="17" height="18.500" fill="#5d90c8"/>
<rect x="1036" y="651" width="2" height="21" fill="#2b323f"/>
<rect x="1057" y="651" width="2" height="21" fill="#2b323f"/>
<rect x="1077" y="651" width="2" height="21" fill="#2b323f"/>
<rect x="1109" y="651" width="2" height="21" fill="#2b323f"/>
<rect x="1131" y="651" width="2" height="21" fill="#2b323f"/>
<path d="M818.5 655v12.500M817.500 656.0h13.500M822.2 655v12.500M817.500 659.5h13.500M825.9 655v12.500M817.500 663.0h13.500M829.6 655v12.500M817.500 666.5h13.500" stroke="#f4f6f8" stroke-width="1.300" fill="none"/>
<rect x="838.3" y="655.8" width="1.800" height="1.800" fill="#eef0f2"/>
<rect x="838.3" y="659.6" width="1.800" height="1.800" fill="#eef0f2"/>
<rect x="838.3" y="663.4" width="1.800" height="1.800" fill="#eef0f2"/>
<rect x="842.1" y="655.8" width="1.800" height="1.800" fill="#eef0f2"/>
<rect x="842.1" y="659.6" width="1.800" height="1.800" fill="#eef0f2"/>
<rect x="842.1" y="663.4" width="1.800" height="1.800" fill="#eef0f2"/>
<rect x="845.9" y="655.8" width="1.800" height="1.800" fill="#eef0f2"/>
<rect x="845.9" y="659.6" width="1.800" height="1.800" fill="#eef0f2"/>
<rect x="845.9" y="663.4" width="1.800" height="1.800" fill="#eef0f2"/>
<path d="M856.2 659.5h5l-2.5 3z" fill="#eef0f2"/>
<path d="M871 658.500h6M874 655.500v6" stroke="#eef0f2" stroke-width="1.200"/><rect x="875" y="662" width="8.500" height="4.500" fill="#eef0f2"/>
<path d="M890 655v11.500h11.500M890 663h3.500v3.500" stroke="#b9bec6" stroke-width="1.200" fill="none"/>
<circle cx="913.300" cy="661.500" r="5" fill="none" stroke="#b9bec6" stroke-width="1.200"/><path d="M913.300 661.500h7.500M913.300 661.500l5-6" stroke="#b9bec6" stroke-width="1.200"/>
<path d="M927.5 659.5h5l-2.5 3z" fill="#eef0f2"/>
<path d="M945.800 654v13M943 657l5.500 7M948.500 657l-5.500 7" stroke="#9aa1ab" stroke-width="1" fill="none"/><rect x="944.300" y="659.300" width="3" height="3" fill="#b9bec6"/>
<path d="M958.5 659.5h5l-2.5 3z" fill="#eef0f2"/>
<path d="M983.500 666.500h-11.500l10.500-10.500" stroke="#b9bec6" stroke-width="1.200" fill="none"/>
<rect x="990.500" y="656" width="11.500" height="11.500" fill="none" stroke="#eef0f2" stroke-width="1.100"/><rect x="989" y="654.500" width="3.200" height="3.200" fill="#5d90c8" stroke="#eef0f2" stroke-width=".9"/>
<path d="M1009.8 659.5h5l-2.5 3z" fill="#eef0f2"/>
<path d="M1023 656.500h12M1023 660h9M1023 663.500h12M1023 667h7" stroke="#eef0f2" stroke-width="1.400"/>
<rect x="1042" y="655" width="8" height="8" fill="none" stroke="#eef0f2" stroke-width="1"/><rect x="1045" y="658" width="8.500" height="9" fill="#eef0f2"/>
<path d="M1068.500 654l-2 8-4.500 5.500 5-3 2.500 3.500 1-5 4.500-2.500-4.500-.5z" fill="#eef0f2"/><path d="M1072.500 654.500l.6 1.500 1.500.6-1.500.6-.6 1.500-.6-1.500-1.500-.6 1.500-.6z" fill="#eef0f2"/>
<path d="M1094.6 660.3L1094.6 661.7L1092.7 662.3L1092.3 663.2L1093.2 664.9L1092.2 665.9L1090.5 665.0L1089.6 665.4L1089.0 667.3L1087.6 667.3L1087.0 665.4L1086.1 665.0L1084.4 665.9L1083.4 664.9L1084.3 663.2L1083.9 662.3L1082.0 661.7L1082.0 660.3L1083.9 659.7L1084.3 658.8L1083.4 657.1L1084.4 656.1L1086.1 657.0L1087.0 656.6L1087.6 654.7L1089.0 654.7L1089.6 656.6L1090.5 657.0L1092.2 656.1L1093.2 657.1L1092.3 658.8L1092.7 659.7z" fill="#eef0f2"/><circle cx="1088.300" cy="661" r="2.200" fill="#3b4453"/>
<path d="M1101.5 659.5h5l-2.5 3z" fill="#eef0f2"/>
<rect x="1116" y="655" width="5" height="5" fill="none" stroke="#b9bec6" stroke-width="1"/><circle cx="1126" cy="660" r="2.600" fill="none" stroke="#b9bec6" stroke-width="1"/><path d="M1117 667.500l3-5 3 5z" fill="none" stroke="#b9bec6" stroke-width="1"/>
<rect x="1138.500" y="654.500" width="12.500" height="10.500" fill="#dfe4ea"/><path d="M1140 663l4-6 4 6M1145 667l3.500-6.500 3.500 6.500z" fill="#e8b08a" stroke="#e8b08a" stroke-width=".8"/>
</svg>

<svg class="abs" style="left:0;top:0" width="1200" height="675" viewBox="0 0 1200 675" font-family="Liberation Sans, sans-serif">
<rect x="575.0" y="23.0" width="69" height="17.799999999999997" fill="none" stroke="#e2383f" stroke-width="2"/>
<rect x="617.0" y="42.5" width="56.200000000000045" height="61.0" fill="none" stroke="#e2383f" stroke-width="2"/>
<rect x="7.8" y="162.7" width="80.2" height="340.8" fill="none" stroke="#d9464d" stroke-width="2"/>
<rect x="99.9" y="162.7" width="25.299999999999997" height="107.80000000000001" fill="none" stroke="#e0464d" stroke-width="2"/>
<text x="655" y="34.2" textLength="18.799999999999955" lengthAdjust="spacingAndGlyphs" font-size="36.5" font-weight="bold" fill="#ee363b" stroke="#ee363b" stroke-width=".9" stroke-linejoin="round">6</text>
<text x="673.5" y="118.3" textLength="21.0" lengthAdjust="spacingAndGlyphs" font-size="35" font-weight="bold" fill="#ee363b" stroke="#ee363b" stroke-width=".9" stroke-linejoin="round">7</text>
<text x="136" y="230.5" textLength="20.5" lengthAdjust="spacingAndGlyphs" font-size="36" font-weight="bold" fill="#ee363b" stroke="#ee363b" stroke-width=".9" stroke-linejoin="round">8</text>
<text x="48" y="551.5" textLength="20" lengthAdjust="spacingAndGlyphs" font-size="35" font-weight="bold" fill="#ee363b" stroke="#ee363b" stroke-width=".9" stroke-linejoin="round">9</text>
</svg>

<div class="abs" style="left:0;top:0;width:2.5px;height:672px;background:linear-gradient(90deg,#2c77a8 0,#2c77a8 1.2px,#163a55 1.3px)"></div>
<div class="abs" style="left:1197px;top:0;width:3px;height:672px;background:linear-gradient(90deg,#163a55 0,#163a55 1.6px,#2c6f9f 1.7px)"></div>
<div class="abs" style="left:0;top:0;width:1200px;height:2px;background:linear-gradient(180deg,#2f74a4 0,#2f74a4 1px,#163a55 1.1px)"></div>
</div>
</body></html>
